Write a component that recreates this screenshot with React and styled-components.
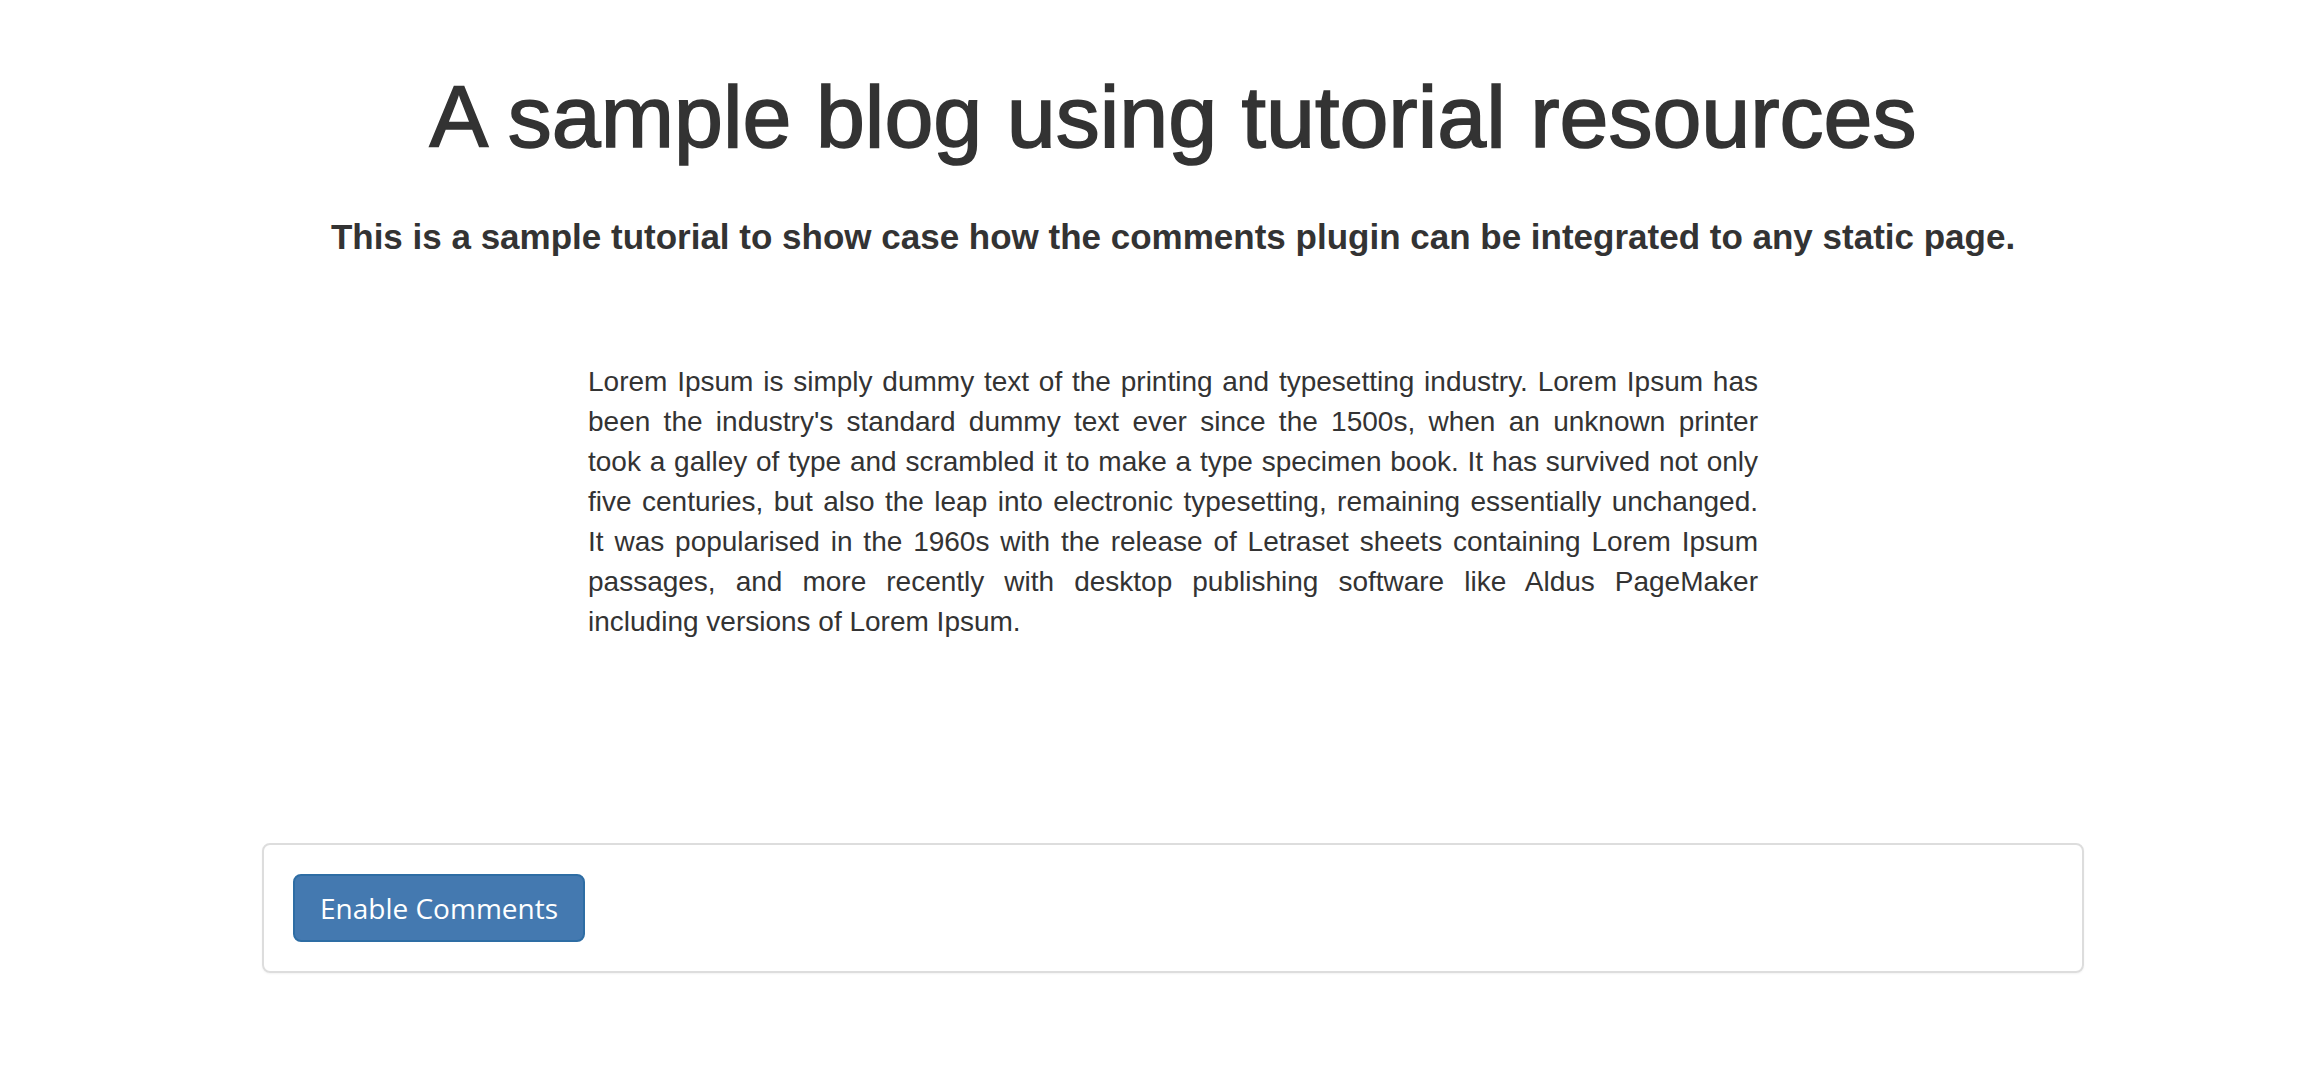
import React from "react";
import styled, { createGlobalStyle } from "styled-components";

const GlobalStyle = createGlobalStyle`
	html, body {
		margin: 0;
		padding: 0;
		background: #fff;
	}
	body {
		font-family: "Liberation Sans", Arial, sans-serif;
		color: #333;
	}
	* {
		box-sizing: border-box;
	}
`;

const Page = styled.div`
	padding: 69px 0 80px 28px;
	display: flex;
	flex-direction: column;
	align-items: center;
`;

const Title = styled.h1`
	margin: 0;
	font-size: 88px;
	line-height: 1.1;
	font-weight: 400;
	-webkit-text-stroke: 1.6px #333;
	text-align: center;
`;

const Subtitle = styled.h4`
	margin: 52px 0 0;
	font-size: 35px;
	line-height: 1.1;
	font-weight: 700;
	text-align: center;
`;

const Article = styled.p`
	width: 1170px;
	margin: 106px 0 0;
	font-size: 28px;
	line-height: 40px;
`;

const Line = styled.span`
	display: block;
	white-space: nowrap;
	text-align: justify;
	text-align-last: ${(props) => (props.last ? "left" : "justify")};
`;

const Panel = styled.div`
	width: 1822px;
	margin-top: 201px;
	padding: 29px;
	border: 2px solid #ddd;
	border-radius: 8px;
	box-shadow: 0 1px 2px rgba(0, 0, 0, 0.05);
	display: flex;
`;

const Button = styled.button`
	font-family: "Open Sans", sans-serif;
	font-size: 28px;
	line-height: 40px;
	padding: 12px 25px;
	color: #fff;
	background: #4479b0;
	border: 2px solid #2e6da4;
	border-radius: 8px;
	cursor: pointer;
`;

const lines = [
	"Lorem Ipsum is simply dummy text of the printing and typesetting industry. Lorem Ipsum has",
	"been the industry's standard dummy text ever since the 1500s, when an unknown printer",
	"took a galley of type and scrambled it to make a type specimen book. It has survived not only",
	"five centuries, but also the leap into electronic typesetting, remaining essentially unchanged.",
	"It was popularised in the 1960s with the release of Letraset sheets containing Lorem Ipsum",
	"passages, and more recently with desktop publishing software like Aldus PageMaker",
	"including versions of Lorem Ipsum.",
];

const App = () => {
	return (
		<>
			<GlobalStyle />
			<Page>
				<Title>A sample blog using tutorial resources</Title>
				<Subtitle>
					This is a sample tutorial to show case how the comments
					plugin can be integrated to any static page.
				</Subtitle>
				<Article>
					{lines.map((text, i) => (
						<Line key={i} last={i === lines.length - 1}>
							{text}
						</Line>
					))}
				</Article>
				<Panel>
					<Button>Enable Comments</Button>
				</Panel>
			</Page>
		</>
	);
};

export default App;
